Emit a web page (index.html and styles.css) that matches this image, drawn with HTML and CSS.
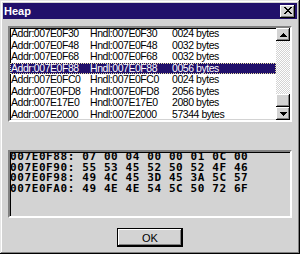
FILE: index.html
```html
<!DOCTYPE html>
<html>
<head>
<meta charset="utf-8">
<link rel="stylesheet" href="styles.css">
</head>
<body>
<div class="window">
  <div class="titlebar">
    <span class="title">Heap</span>
    <div class="close">
      <svg width="8" height="7" viewBox="0 0 8 7"><path d="M0 0h2v1h1v1h2v-1h1v-1h2v1h-1v1h-1v1h-1v1h1v1h1v1h1v1h-2v-1h-1v-1h-2v1h-1v1h-2v-1h1v-1h1v-1h1v-1h-1v-1h-1v-1h-1z" fill="#000"/></svg>
    </div>
  </div>
  <div class="body">
    <div class="listbox">
      <div class="rows">
        <div class="row"><span>Addr:007E0F30</span><span>Hndl:007E0F30</span><span>0024 bytes</span></div>
        <div class="row"><span>Addr:007E0F48</span><span>Hndl:007E0F48</span><span>0032 bytes</span></div>
        <div class="row"><span>Addr:007E0F68</span><span>Hndl:007E0F68</span><span>0032 bytes</span></div>
        <div class="row selected"><span>Addr:007E0F88</span><span>Hndl:007E0F88</span><span>0056 bytes</span></div>
        <div class="row"><span>Addr:007E0FC0</span><span>Hndl:007E0FC0</span><span>0024 bytes</span></div>
        <div class="row"><span>Addr:007E0FD8</span><span>Hndl:007E0FD8</span><span>2056 bytes</span></div>
        <div class="row"><span>Addr:007E17E0</span><span>Hndl:007E17E0</span><span>2080 bytes</span></div>
        <div class="row"><span>Addr:007E2000</span><span>Hndl:007E2000</span><span>57344 bytes</span></div>
      </div>
      <div class="scrollbar">
        <div class="sb-btn">
          <svg width="7" height="4" viewBox="0 0 7 4"><path d="M3 0h1v1h1v1h1v1h1v1h-7v-1h1v-1h1v-1h1z" fill="#000"/></svg>
        </div>
        <div class="track"></div>
        <div class="sb-btn thumb"></div>
        <div class="sb-btn">
          <svg width="7" height="4" viewBox="0 0 7 4"><path d="M0 0h7v1h-1v1h-1v1h-1v1h-1v-1h-1v-1h-1v-1h-1z" fill="#000"/></svg>
        </div>
      </div>
    </div>
    <div class="hexbox">
      <div class="hexline">007E0F88: 07 00 04 00 00 01 0C 00</div>
      <div class="hexline">007E0F90: 55 53 45 52 50 52 4F 46</div>
      <div class="hexline">007E0F98: 49 4C 45 3D 45 3A 5C 57</div>
      <div class="hexline">007E0FA0: 49 4E 4E 54 5C 50 72 6F</div>
    </div>
    <div class="actions">
      <div class="ok"><span>OK</span></div>
    </div>
  </div>
</div>
</body>
</html>
```

FILE: styles.css
```css
html, body {
  margin: 0;
  padding: 0;
  background: #d3d3d3;
}
.window {
  width: 300px;
  height: 254px;
  box-sizing: border-box;
  padding: 3px;
  background: #d3d3d3;
  box-shadow: inset -1px -1px #000, inset 1px 1px #e6e6e6, inset -2px -2px #808080, inset 2px 2px #fff;
  font-family: "Liberation Sans", Arial, sans-serif;
  display: flex;
  flex-direction: column;
}
.titlebar {
  height: 16px;
  background: #21106b;
  display: flex;
  align-items: center;
  justify-content: space-between;
}
.title {
  color: #fff;
  font-weight: bold;
  font-size: 11px;
  padding-left: 1px;
}
.close {
  width: 15px;
  height: 13px;
  margin-right: 2px;
  background: #d3d3d3;
  box-shadow: inset -1px -1px #000, inset 1px 1px #fff, inset -2px -2px #808080;
  display: flex;
  align-items: center;
  justify-content: center;
}
.close svg { display: block; margin-top: -1px; }
.body {
  flex: 1;
  padding: 7px 5px 0 5px;
  display: flex;
  flex-direction: column;
}
.listbox {
  height: 96px;
  box-sizing: border-box;
  border: 2px solid;
  border-color: #808080 #fff #fff #808080;
  box-shadow: inset 1px 1px #000, inset -1px -1px #d3d3d3;
  background: #fff;
  display: flex;
}
.rows {
  flex: 1;
}
.row {
  display: grid;
  grid-template-columns: 79px 82px auto;
  height: 11.5px;
  line-height: 11.5px;
  font-size: 10.5px;
  letter-spacing: -0.45px;
  padding-left: 1px;
  color: #000;
  white-space: nowrap;
}
.row.selected {
  background: #21106b;
  color: #fff;
  outline: 1px dotted #e8e0a0;
  outline-offset: -1px;
}
.scrollbar {
  width: 14px;
  display: flex;
  flex-direction: column;
}
.sb-btn {
  height: 13px;
  background: #d3d3d3;
  box-shadow: inset -1px -1px #000, inset 1px 1px #fff, inset -2px -2px #808080;
  display: flex;
  align-items: center;
  justify-content: center;
}
.track {
  flex: 1;
  background: repeating-conic-gradient(#fff 0 25%, #d3d3d3 0 50%) 0 0 / 2px 2px;
}
.hexbox {
  margin-top: 28px;
  height: 68px;
  box-sizing: border-box;
  border: 2px solid;
  border-color: #808080 #fff #fff #808080;
  box-shadow: inset 1px 1px #000, inset -1px -1px #d3d3d3;
  background: #d3d3d3;
}
.hexline {
  font-family: "DejaVu Sans Mono", monospace;
  font-weight: bold;
  font-size: 11px;
  letter-spacing: 0.6px;
  line-height: 10.7px;
  white-space: pre;
  color: #000;
}
.actions {
  display: flex;
  justify-content: center;
  margin-top: 10px;
}
.ok {
  width: 66px;
  height: 19px;
  box-sizing: border-box;
  border: 1px solid #000;
  box-shadow: inset -1px -1px #000, inset 1px 1px #fff, inset -2px -2px #808080;
  display: flex;
  align-items: center;
  justify-content: center;
  font-size: 11px;
  color: #000;
}
```
